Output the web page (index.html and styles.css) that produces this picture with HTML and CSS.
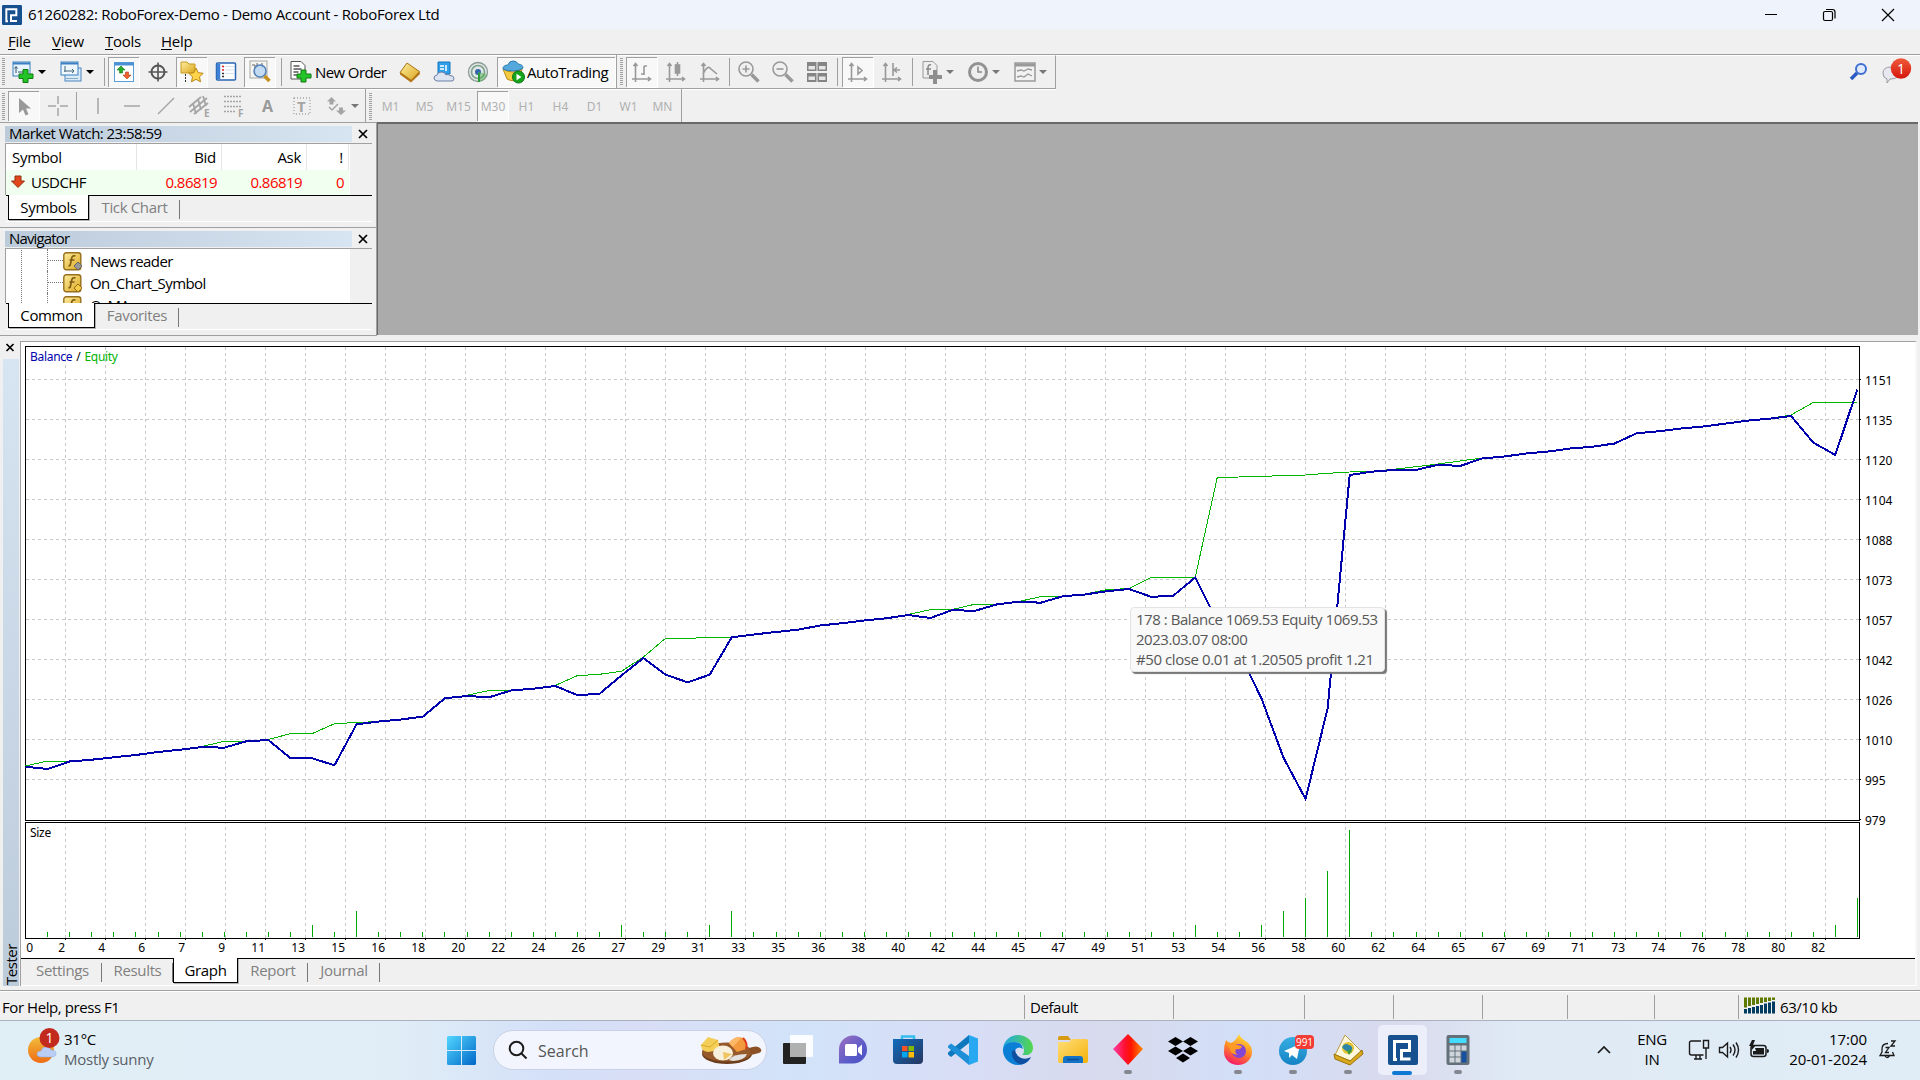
FILE: index.html
```html
<!DOCTYPE html>
<html lang="en">
<head>
<meta charset="utf-8">
<title>61260282: RoboForex-Demo - Demo Account - RoboForex Ltd</title>
<link rel="stylesheet" href="styles.css">
</head>
<body>
<svg class="defs" width="0" height="0">
  <defs>
    <linearGradient id="gold" x1="0" y1="0" x2="1" y2="1"><stop offset="0" stop-color="#fdeea0"/><stop offset="1" stop-color="#dba51c"/></linearGradient>
    <linearGradient id="win" x1="0" y1="0" x2="1" y2="1"><stop offset="0" stop-color="#52d7ff"/><stop offset="1" stop-color="#0067c8"/></linearGradient>
    <linearGradient id="sun" x1="0" y1="0" x2="0" y2="1"><stop offset="0" stop-color="#f0bc3a"/><stop offset="1" stop-color="#ef6c14"/></linearGradient>
    <linearGradient id="purple" x1="0" y1="0" x2="1" y2="1"><stop offset="0" stop-color="#a070c0"/><stop offset=".6" stop-color="#5b5cc8"/><stop offset="1" stop-color="#4a4fc4"/></linearGradient>
    <linearGradient id="store" x1="0" y1="0" x2="1" y2="1"><stop offset="0" stop-color="#0f6cbd"/><stop offset="1" stop-color="#26365e"/></linearGradient>
    <linearGradient id="edge" x1="0" y1="0" x2="1" y2="0"><stop offset="0" stop-color="#1fa4e8"/><stop offset="1" stop-color="#55d84b"/></linearGradient>
    <linearGradient id="folder" x1="0" y1="0" x2="1" y2="1"><stop offset="0" stop-color="#ffdf7a"/><stop offset="1" stop-color="#f5b10a"/></linearGradient>
    <linearGradient id="diamond" x1="0" y1="0" x2="1" y2="0"><stop offset="0" stop-color="#ff3ca8"/><stop offset=".4" stop-color="#ff1030"/><stop offset=".6" stop-color="#ff1400"/><stop offset="1" stop-color="#ff8a00"/></linearGradient>
    <linearGradient id="fox" x1=".7" y1="0" x2=".3" y2="1"><stop offset="0" stop-color="#ffe33a"/><stop offset=".5" stop-color="#ff8a22"/><stop offset="1" stop-color="#f5156c"/></linearGradient>
    <linearGradient id="tele" x1="0" y1="0" x2="0" y2="1"><stop offset="0" stop-color="#37aee2"/><stop offset="1" stop-color="#1583c4"/></linearGradient>
    <linearGradient id="badge" x1="0" y1="0" x2="0" y2="1"><stop offset="0" stop-color="#ef5a3a"/><stop offset="1" stop-color="#d5170d"/></linearGradient>
    <symbol id="fn" viewBox="0 0 20 20">
      <rect x=".8" y=".8" width="17" height="17" rx="2.5" fill="url(#gold)" stroke="#96701c" stroke-width="1.4"/>
      <path d="M12.500 4c-3-1-3.600 1-4 3l-1 5c-.3 1.500-1 2-2 1.500M6.500 8h5" fill="none" stroke="#7d5a10" stroke-width="1.600"/>
    </symbol>
    <symbol id="robo" viewBox="0 0 30 30">
      <rect width="30" height="30" rx="2" fill="#17508f"/>
      <path d="M6.500 25.500V6.500H21.500V15.500H13.500V24H22.500M5 24.500H9" fill="none" stroke="#fff" stroke-width="3"/>
    </symbol>
  </defs>
</svg>

<header class="titlebar">
  <svg class="app-icon" width="20" height="20"><use href="#robo" width="20" height="20"/></svg>
  <span class="title-text">61260282: RoboForex-Demo - Demo Account - RoboForex Ltd</span>
  <div class="win-controls">
    <svg width="60" height="28"><path d="M25 13.500h12" stroke="#000"/></svg>
    <svg width="58" height="28" fill="none" stroke="#000" stroke-width="1.200"><rect x="23.500" y="10.500" width="9" height="9" rx="1.500"/><path d="M26 8.500h6.500q2.500 0 2.500 2.500v6.500"/></svg>
    <svg width="60" height="28"><path d="M24 8l12 12M36 8L24 20" stroke="#000" stroke-width="1.200"/></svg>
  </div>
</header>

<nav class="menubar">
  <span class="m-file"><u>F</u>ile</span><span class="m-view"><u>V</u>iew</span><span class="m-tools"><u>T</u>ools</span><span class="m-help"><u>H</u>elp</span>
</nav>

<div class="toolrow row-one">
  <div class="toolbar">
    <i class="grip"></i>
    <span class="btn tight"><svg width="22" height="22"><rect x="1" y="1" width="17" height="14" fill="#e8f4fd" stroke="#3a7fc0"/><path d="M1 2.500h17" stroke="#3a7fc0" stroke-width="2"/><path d="M4 6v6M2.500 7.500L4 5.500l1.500 2M6 11h6" stroke="#356" fill="none"/><path d="M11 8.500h5v4.500h5v4.500h-5v4h-5v-4H7V13h4z" fill="#22c427" stroke="#107a12"/></svg></span><i class="arr"></i>
    <span class="btn tight ml9"><svg width="22" height="22"><rect x="5" y="7" width="16" height="13" fill="#d9ebf8" stroke="#4a86c0"/><rect x="1" y="1" width="17" height="13" fill="#edf6fd" stroke="#3a7fc0"/><path d="M1 2.500h17" stroke="#3a7fc0" stroke-width="2"/><path d="M4 10h10M5 5v6M12 8l2 2-2 2" stroke="#467" fill="none"/><path d="M6 17.500h12" stroke="#8ab"/></svg></span><i class="arr"></i>
    <i class="sep ml9"></i>
    <span class="btn on ml3"><svg width="22" height="22"><rect x="1.500" y="1.500" width="19" height="19" fill="#fff" stroke="#5a9fd8"/><path d="M1 3h20" stroke="#4a90d4" stroke-width="3"/><path d="M8 5l4 4H9.500v3h-3V9H4z" fill="#22ac26" stroke="#14781a" stroke-width=".6"/><path d="M14 18l4-4h-2.500v-3h-3v3H10z" fill="#f0622c" stroke="#b03a14" stroke-width=".6"/></svg></span>
    <span class="btn"><svg width="22" height="22" fill="none" stroke="#555" stroke-width="2"><circle cx="11" cy="11" r="6.500"/><path d="M11 1.500v19M1.500 11h19" stroke-width="1.600"/></svg></span>
    <span class="btn on"><svg width="24" height="24"><path d="M1 5V2h6l2 2h6v9H1z" fill="url(#gold)" stroke="#c79a1e"/><path d="M5.500 14v8" stroke="#333" stroke-dasharray="2 1"/><path d="M16 8l2.200 4.700 5 .6-3.700 3.500 1 5L16 19.300l-4.500 2.500 1-5-3.700-3.500 5-.6z" fill="#fbd44a" stroke="#b98613"/></svg></span>
    <span class="btn"><svg width="22" height="22"><rect x="1.500" y="2" width="19" height="17" rx="1" fill="#fdfeff" stroke="#2a66b4" stroke-width="1.500"/><path d="M3.500 3v15" stroke="#3d82d4" stroke-width="3.500"/><path d="M7 5.500h2M7 9h2" stroke="#d22" stroke-width="1.500"/><path d="M7 12.500h2M7 15.500h2" stroke="#333" stroke-width="1.500"/><path d="M10 5.500h9M10 9h9M10 12.500h9" stroke="#d6e2ee"/></svg></span>
    <span class="btn on"><svg width="24" height="24"><rect x="2" y="1" width="17" height="17" fill="#f5f5f2" stroke="#a5a5a0"/><path d="M4 5h3v8M9 3v5M14 3v5" stroke="#666" fill="none"/><circle cx="12" cy="11" r="6" fill="#b9d6f3" fill-opacity=".85" stroke="#4f7fb5" stroke-width="1.500"/><path d="M16.500 16l5 5" stroke="#c8901c" stroke-width="3.500"/></svg></span>
    <i class="sep ml3"></i>
    <span class="btn ml3"><svg width="24" height="24"><path d="M2 1.500h10l4 4V19H2z" fill="#fff" stroke="#555"/><path d="M4.500 6h6M4.500 9h8M4.500 12h5M4.500 15h4" stroke="#555" stroke-width="1.500"/><path d="M12 10h5v4h5v4h-5v4h-5v-4H8v-4h4z" fill="#22c427" stroke="#107a12"/></svg></span>
    <span class="btn-label">New Order</span>
    <span class="btn"><svg width="22" height="22"><path d="M1 11.500L8 2l12.500 8.500-8 9z" fill="url(#gold)" stroke="#a8741a"/><path d="M1 11v2.500l11 8V19zM12 19v2.500l9-8.500-.5-2.500z" fill="#b37516"/></svg></span>
    <span class="btn"><svg width="22" height="22"><path d="M5 1h12v12H5z" fill="#2f9fe8" stroke="#1b74bd"/><path d="M7 5h4M13 4v6M7 8h4" stroke="#fff" stroke-width="1.500"/><path d="M4 20q-3-.5-3-3t3-3q1-3 4.500-3t4.500 3q2-1.500 4 .5 4 0 4 3t-3 2.500z" fill="#dce4f2" stroke="#6c7fa5"/></svg></span>
    <span class="btn"><svg width="22" height="22" fill="none"><circle cx="11" cy="11" r="9.500" fill="#e2e8e5" stroke="#8a9a94" stroke-width="1.300"/><circle cx="11" cy="11" r="6.500" stroke="#7fa08e" stroke-width="1.600"/><circle cx="11" cy="11" r="3" fill="#3366aa"/><path d="M11 11v10q7-1 9-8" fill="#59b45a" fill-opacity=".55"/><path d="M12 12v9" stroke="#2a9a3a" stroke-width="2"/></svg></span>
    <span class="btn on wide ml1"><svg width="24" height="24"><path d="M1 9q10 6 19 0l-2 9q-6 5-13 1z" fill="#f2cb3e" stroke="#b98a1a"/><path d="M1 9Q1 5 6 5q1-4 5-4t5 3q5 .5 5 4-3 3-10 3T1 9z" fill="#54a8dc" stroke="#2d7cb0"/><circle cx="16.500" cy="17" r="6" fill="#15a51c" stroke="#0b7511"/><path d="M14.500 13.800l5 3.200-5 3.200z" fill="#fff"/></svg><span class="auto">AutoTrading</span></span>
    <i class="sep edge"></i>
    <i class="grip short"></i>
    <span class="btn on"><svg width="22" height="22" class="gi"><path d="M4.500 2v19M1 18h19M2.500 5l2-2.500 2 2.500M17 16l2.500 2-2.500 2M13 5v9M13 5h3M10 13h3"/></svg></span>
    <span class="btn"><svg width="22" height="22" class="gi"><path d="M4.500 2v19M1 18h19M2.500 5l2-2.500 2 2.500M17 16l2.500 2-2.500 2M12.500 1v14"/><rect x="10.500" y="4" width="4" height="8" fill="#999"/></svg></span>
    <span class="btn"><svg width="22" height="22" class="gi"><path d="M4.500 2v19M1 18h19M2.500 5l2-2.500 2 2.500M17 16l2.500 2-2.500 2M4 13q5-10 8-5l6 5"/></svg></span>
    <i class="sep ml1"></i>
    <span class="btn ml3"><svg width="24" height="24" class="gi"><circle cx="9" cy="9" r="7"/><path d="M5.500 9h7M9 5.500v7"/><path d="M14.500 14.500l7 7" stroke-width="3.500"/></svg></span>
    <span class="btn"><svg width="24" height="24" class="gi"><circle cx="9" cy="9" r="7"/><path d="M5.500 9h7"/><path d="M14.500 14.500l7 7" stroke-width="3.500"/></svg></span>
    <span class="btn"><svg width="22" height="22"><path d="M1 1h9.500v9H1zM11.500 1H21v9h-9.500zM1 12h9.500v9H1zM11.500 12H21v9h-9.500z" fill="#858585"/><path d="M2.500 5h6.500v3.500H2.500zM13 5h6.500v3.500H13zM2.500 15.500h6.500V19H2.500zM13 15.500h6.500V19H13z" fill="#e6e6e6"/></svg></span>
    <i class="sep ml2"></i>
    <span class="btn on ml4"><svg width="22" height="22" class="gi"><path d="M4.500 2v19M1 18h19M2.500 5l2-2.500 2 2.500M17 16l2.500 2-2.500 2M11 6v7l4-3.500z"/></svg></span>
    <span class="btn"><svg width="22" height="22" class="gi"><path d="M4.500 2v19M1 18h19M2.500 5l2-2.500 2 2.500M17 16l2.500 2-2.500 2M12 2v13M13 9h6M16 6.500L13 9l3 2.500"/></svg></span>
    <i class="sep ml2"></i>
    <span class="btn ml4"><svg width="24" height="24"><path d="M2 1.500h10l4 4V18H2z" fill="#eee" stroke="#999"/><path d="M10 5q-3-1-3 3v7M5 9h5" stroke="#888" stroke-width="1.500" fill="none"/><path d="M12 10h4v5h5v4h-5v5h-4v-5H8v-4h4z" fill="#8e8e8e"/></svg></span><i class="arr dim near"></i>
    <span class="btn nud"><svg width="22" height="22"><circle cx="11" cy="11" r="8.500" fill="#eee" stroke="#929292" stroke-width="3"/><path d="M11 5.500V11h4" stroke="#888" fill="none" stroke-width="1.500"/></svg></span><i class="arr dim"></i>
    <span class="btn nud more"><svg width="22" height="22"><rect x="1" y="2" width="20" height="18" fill="#f2f2f2" stroke="#999" stroke-width="1.500"/><path d="M1 4h20" stroke="#999" stroke-width="3"/><path d="M3 10l4-1 3 1 4-2 4 1M3 16l4-1 3 1 4-3 4 2" fill="none" stroke="#999" stroke-width="1.300"/></svg></span><i class="arr dim"></i>
  </div>
  <div class="right-tools">
    <svg width="20" height="20" fill="none"><circle cx="12" cy="7" r="5" fill="#dfeaff" stroke="#3c6fd0" stroke-width="2"/><path d="M8 11l-6 6" stroke="#2b5cc4" stroke-width="3.500"/></svg>
    <svg width="34" height="28"><path d="M2 16q0-6 8-6t8 6-9 6l-3 4v-4q-4-1-4-6z" fill="#e8e8f0" stroke="#9a9aa4"/><circle cx="20" cy="11.500" r="10.200" fill="url(#badge)"/><text x="20" y="16.500" text-anchor="middle" class="badge-num">1</text></svg>
  </div>
</div>

<div class="toolrow row-two">
  <div class="toolbar">
    <i class="grip"></i>
    <span class="btn on"><svg width="22" height="22"><path d="M6 2v15l4-3.500 2.500 6 3-1.300L13 12.500h5z" fill="#999"/></svg></span>
    <span class="btn"><svg width="22" height="22" class="gl"><path d="M11 1v8M11 13v8M1 11h8M13 11h8"/></svg></span>
    <i class="sep"></i>
    <span class="btn ml5"><svg width="22" height="22" class="gl"><path d="M11 3v16"/></svg></span>
    <span class="btn"><svg width="22" height="22" class="gl"><path d="M3 11h16"/></svg></span>
    <span class="btn"><svg width="22" height="22" class="gl"><path d="M3 19L19 3"/></svg></span>
    <span class="btn"><svg width="24" height="24" class="gl"><path d="M1 13L13 3M2 18L19 4M6 20L20 9M5 9l3 11M10 5l3 11M15 2l3 10" stroke-width="1.800"/><text x="16" y="23" class="gt">E</text></svg></span>
    <span class="btn"><svg width="24" height="24" class="gl"><path d="M2 2.500h18M2 7.500h18M2 12.500h18M2 17.500h12" stroke-dasharray="2 1" stroke-width="1.500"/><text x="16" y="23" class="gt">F</text></svg></span>
    <span class="btn"><b class="letter">A</b></span>
    <span class="btn"><svg width="22" height="22" class="gl"><rect x="3" y="3" width="16" height="16" stroke-dasharray="1 2" stroke-width="1.300"/><text x="6" y="17" class="gt big">T</text></svg></span>
    <span class="btn"><svg width="22" height="22" fill="#a5a5a5"><path d="M6.500 2l4.500 4.500-2.500 0v3H4.500v-3H2zM16 20l-5-4.500h3v-3h4v3h3z"/><path d="M4 12l3 3 6-6" fill="none" stroke="#a5a5a5" stroke-width="1.500"/></svg></span><i class="arr dim"></i>
    <i class="sep edge ml5"></i>
    <i class="grip short"></i>
    <span class="btn tf">M1</span><span class="btn tf">M5</span><span class="btn tf">M15</span><span class="btn on tf">M30</span><span class="btn tf">H1</span><span class="btn tf">H4</span><span class="btn tf">D1</span><span class="btn tf">W1</span><span class="btn tf mn">MN</span>
  </div>
</div>

<main class="dock">
  <aside class="side">
    <section class="panel watch">
      <div class="cap"><span class="cap-t">Market Watch: 23:58:59</span><svg width="10" height="10"><path d="M1 1l8 8M9 1L1 9" stroke="#000" stroke-width="1.700"/></svg></div>
      <div class="box">
        <div class="grid head"><span>Symbol</span><span>Bid</span><span>Ask</span><span>!</span></div>
        <div class="grid quote"><span><svg width="14" height="13"><path d="M4 1h6v5h3.500L7 12.500.5 6H4z" fill="#e2471c" stroke="#93300f"/></svg>USDCHF</span><span>0.86819</span><span>0.86819</span><span>0</span></div>
      </div>
      <div class="tabs"><span class="tab active t-sym">Symbols</span><span class="tab t-tick">Tick Chart</span></div>
    </section>
    <section class="panel navi">
      <div class="cap"><span class="cap-n">Navigator</span><svg width="10" height="10"><path d="M1 1l8 8M9 1L1 9" stroke="#000" stroke-width="1.700"/></svg></div>
      <div class="box tree">
        <div class="node"><svg width="20" height="20"><use href="#fn" width="20" height="20"/><path d="M15 10l4 4-4 4-4-4z" fill="#999" stroke="#666"/></svg><span class="n1">News reader</span></div>
        <div class="node"><svg width="20" height="20"><use href="#fn" width="20" height="20"/><path d="M15 10l4 4-4 4-4-4z" fill="#f3cb45" stroke="#96701c"/></svg><span class="n2">On_Chart_Symbol</span></div>
        <div class="node"><svg width="20" height="20"><use href="#fn" width="20" height="20"/></svg><span>OzMA</span></div>
      </div>
      <div class="tabs"><span class="tab active t-com">Common</span><span class="tab t-fav">Favorites</span></div>
    </section>
  </aside>
  <div class="workspace"></div>
</main>

<section class="tester">
  <div class="rail">
    <svg width="20" height="17"><path d="M6.500 4l7 7M13.500 4l-7 7" stroke="#000" stroke-width="1.700"/></svg>
    <div class="rail-bar"><span>Tester</span></div>
  </div>
  <div class="tester-main">
    <div class="graph">
      <div class="plot-col">
        <div class="plot">
          <svg class="chart" width="1840" height="598" viewBox="25 346 1840 598">
            <g stroke="#c8c8c8" stroke-dasharray="3 3" shape-rendering="crispEdges">
              <path d="M26 379.500H1859M26 419.500H1859M26 459.500H1859M26 499.500H1859M26 539.500H1859M26 579.500H1859M26 619.500H1859M26 659.500H1859M26 699.500H1859M26 739.500H1859M26 779.500H1859"/>
              <path d="M65.500 347V938M105.500 347V938M145.500 347V938M185.500 347V938M225.500 347V938M265.500 347V938M305.500 347V938M345.500 347V938M385.500 347V938M425.500 347V938M465.500 347V938M505.500 347V938M545.500 347V938M585.500 347V938M625.500 347V938M665.500 347V938M705.500 347V938M745.500 347V938M785.500 347V938M825.500 347V938M865.500 347V938M905.500 347V938M945.500 347V938M985.500 347V938M1025.500 347V938M1065.500 347V938M1105.500 347V938M1145.500 347V938M1185.500 347V938M1225.500 347V938M1265.500 347V938M1305.500 347V938M1345.500 347V938M1385.500 347V938M1425.500 347V938M1465.500 347V938M1505.500 347V938M1545.500 347V938M1585.500 347V938M1625.500 347V938M1665.500 347V938M1705.500 347V938M1745.500 347V938M1785.500 347V938M1825.500 347V938"/>
            </g>
            <g fill="none" stroke="#000" shape-rendering="crispEdges">
              <path d="M25.500 346.500H1859.500V820.500H25.500zM25.500 822.500H1859.500V938.500H25.500z"/>
              <path d="M26 821.500H1859" stroke="#fff"/>
              <path d="M65 939.500H1860" stroke-dasharray="1 39"/>
              <path d="M1860.500 379V821" stroke-dasharray="1 39"/>
            </g>
            <g fill="none" shape-rendering="crispEdges">
              <polyline stroke="#00b400" vector-effect="non-scaling-stroke" transform="translate(25.500 0) scale(22.07 1)" points="0,766 1,761 2,761 3,759.700 7,749.700 8,746.500 9,741.300 10,741 11,739.500 12,733.700 13,733.500 14,723.700 15,722.500 16,721.500 17,719.300 18,716.700 19,698.300 20,695.300 21,690.500 22,690 23,688.700 24,685.500 25,675.700 26,674.300 27,671.300 28,657 29,638.300 30,638.300 31,637.500 32,637 33,634.300 34,631.700 35,629.700 36,625 37,622.700 38,620.300 39,618.300 40,614.500 41,609.700 42,609.500 43,604.300 44,604 45,601.500 46,596.700 47,596 48,594 49,589.700 50,588.500 51,577.300 53,577.300 54,477.300 55,477 56,476.300 57,475.700 58,475 59,473.300 60,472 61,471.300 62,469.300 63,466.700 64,464 65,461 66,458 67,456.300 71,446.500 72,443 73,433 74,431 75,428 76,426 77,423.700 78,420.300 79,418.500 80,415 81,402.500 83,402.500"/>
              <polyline stroke="#0000ac" stroke-width="2" vector-effect="non-scaling-stroke" transform="translate(25.500 0) scale(22.07 1)" points="0,766.700 1,769 2,761.500 3,759.700 4,757.300 5,755 6,752 7,749.700 8,747 9,747.700 10,741.300 11,740 12,758 13,758.300 14,765.300 15,724.300 16,721.500 17,719.500 18,716.700 19,698.300 20,696 21,697.300 22,690.500 23,688.700 24,686 25,695 26,694 27,675.500 28,658 29,674.700 30,682.300 31,674.700 32,637.300 33,634.500 34,632 35,629.700 36,625.500 37,623.200 38,620.500 39,618.300 40,615 41,618 42,610 43,611 44,604.500 45,601.700 46,602.700 47,596.300 48,594.500 49,591.200 50,589 51,596.800 52,595.800 53,577.500 54,621.700 55,653 56,698.300 57,757.700 58,799 59,708.300 60,475 61,471.700 62,470 63,470 64,464.700 65,466 66,458.500 67,456.500 68,453.500 69,451.500 70,448.500 71,446.700 72,443.500 73,433.300 74,431.300 75,428.500 76,426.500 77,423.700 78,420.700 79,418.700 80,416 81,442.500 82,455 83,389.500"/>
              <path stroke="#00a800" stroke-width="5" stroke-dasharray="1 21.070" d="M47.200 934.500H1858"/>
              <path stroke="#00a800" vector-effect="non-scaling-stroke" transform="translate(25.500 0) scale(22.07 1)" d="M13 925V937M15 911V937M27 925V937M31 925V937M32 911V937M53 925V937M56 925V937M57 911V937M58 898V937M59 871V937M60 830V937M82 925V937M83 898V937"/>
            </g>
          </svg>
          <div class="legend"><span class="lb">Balance</span> / <span class="lg">Equity</span></div>
          <div class="size-label">Size</div>
        </div>
        <div class="xaxis"><span>0</span><span>2</span><span>4</span><span>6</span><span>7</span><span>9</span><span>11</span><span>13</span><span>15</span><span>16</span><span>18</span><span>20</span><span>22</span><span>24</span><span>26</span><span>27</span><span>29</span><span>31</span><span>33</span><span>35</span><span>36</span><span>38</span><span>40</span><span>42</span><span>44</span><span>45</span><span>47</span><span>49</span><span>51</span><span>53</span><span>54</span><span>56</span><span>58</span><span>60</span><span>62</span><span>64</span><span>65</span><span>67</span><span>69</span><span>71</span><span>73</span><span>74</span><span>76</span><span>78</span><span>80</span><span>82</span></div>
      </div>
      <div class="yaxis"><span>1151</span><span>1135</span><span>1120</span><span>1104</span><span>1088</span><span>1073</span><span>1057</span><span>1042</span><span>1026</span><span>1010</span><span>995</span><span>979</span></div>
      <div class="tooltip"><span>178 : Balance 1069.53 Equity 1069.53</span><br><span>2023.03.07 08:00</span><br><span class="deal">#50 close 0.01 at 1.20505 profit 1.21</span></div>
    </div>
    <div class="tabs tester-tabs"><span class="tab t-set">Settings</span><span class="tab t-res">Results</span><span class="tab active t-gra">Graph</span><span class="tab t-rep">Report</span><span class="tab t-jou">Journal</span></div>
  </div>
</section>

<footer class="status">
  <span class="s-help">For Help, press F1</span><span class="c1">Default</span><span class="c2"></span><span class="c3"></span><span class="c4"></span><span class="c5"></span><span class="c6"></span><span class="c7"></span>
  <span class="traffic"><svg width="32" height="17"><path d="M0 .5h3v10H0zM4 .5h3V9H4zM8 .5h3V8H8zM12 .5h3V7h-3zM16 .5h3V6h-3zM20 .5h3V5h-3zM24 .5h3V4h-3zM28 .5h3V3h-3z" fill="#5f7a00"/><path d="M0 12h3v4.500H0zM4 11h3v5.500H4zM8 10h3v6.500H8zM12 9h3v7.500h-3zM16 8h3v8.500h-3zM20 6.500h3v10h-3zM24 5.500h3v11h-3zM28 4.500h3v12h-3z" fill="#003c5f"/></svg>63/10 kb</span>
</footer>

<footer class="taskbar">
  <div class="weather">
    <svg width="38" height="40"><circle cx="14" cy="23" r="13" fill="url(#sun)"/><path d="M14 30q-4 0-4-3t4-3q1-4 5-4t5 3q5 0 5 3.500T24 30z" fill="#b9cdf5" stroke="#8aa8e0" stroke-width=".5"/><circle cx="22.500" cy="11" r="10" fill="#c32a1e"/><text x="22.500" y="16" text-anchor="middle" class="badge-num">1</text></svg>
    <div class="wt"><span>31°C</span><span class="w2">Mostly sunny</span></div>
  </div>
  <div class="apps">
    <svg class="start" width="30" height="30"><path d="M0 1.500Q0 0 1.500 0H14v14H0zM15 0h12.500Q29 0 29 1.500V14H15zM0 15h14v14H1.500Q0 29 0 27.500zM15 15h14v12.500q0 1.500-1.500 1.500H15z" fill="url(#win)"/></svg>
    <div class="search">
      <svg width="20" height="20" fill="none" stroke="#1c1c1c" stroke-width="2"><circle cx="8.500" cy="8.500" r="6.800"/><path d="M13.500 13.500l5 5"/></svg>
      <span>Search</span>
      <svg class="food" width="62" height="32"><ellipse cx="27" cy="19" rx="25" ry="10" fill="#6d3d1c"/><ellipse cx="27" cy="17" rx="25" ry="9.500" fill="#96592b"/><path d="M49 13q8-3 11 0t-1 5l-8 2z" fill="#8b5026"/><path d="M1 10L8 2l10 3 2 10-12 2q-7-1-7-7z" fill="#f3cf58"/><path d="M1 10l9 2 8-7" stroke="#d9a92a" fill="none"/><path d="M29 8q6-8 14-5 4 4 3 11l-9 3z" fill="#f49a3e"/><path d="M29 8q6-8 12-5L33 12z" fill="#ffb868"/><path d="M43 3q5 5 3 11" stroke="#dc3c1c" stroke-width="2" fill="none"/><ellipse cx="23" cy="18" rx="10" ry="7.500" fill="#f7f0dc"/><path d="M23 17l9 2-8 6z" fill="#eec560"/><path d="M29 25q3-6 18-6-2 6-14 7z" fill="#e4e2e0"/></svg>
    </div>
    <span class="app"><svg width="32" height="32"><rect x="1" y="9" width="23" height="21" rx="1" fill="#222"/><rect x="8" y="1" width="23" height="22" rx="1" fill="#fff" fill-opacity=".88"/><rect x="8" y="9" width="16" height="14" fill="#b0b0b0"/></svg></span>
    <span class="app"><svg width="32" height="32"><path d="M2 30V15a14 14 0 1 1 14 14.500H2z" fill="url(#purple)"/><rect x="8" y="10" width="12" height="12" rx="1.500" fill="#fff"/><path d="M21 14l4-3.500v11L21 18z" fill="#fff"/></svg></span>
    <span class="app"><svg width="32" height="32"><path d="M10 6V2.500h12V6" stroke="#35bdf0" stroke-width="2.500" fill="none"/><path d="M1 5h30v21q0 4-4 4H5q-4 0-4-4z" fill="url(#store)"/><path d="M10 12h5.500v5H10z" fill="#f35325"/><path d="M16.500 12H22v5h-5.500z" fill="#81bc06"/><path d="M10 18h5.500v5.500H10z" fill="#05a6f0"/><path d="M16.500 18H22v5.500h-5.500z" fill="#ffba08"/></svg></span>
    <span class="app"><svg width="32" height="32"><path d="M22 1v8L4 23l-3-2.500v-2z" fill="#0f77bd"/><path d="M1 12l3-2.500L22 22v9L1 13.500z" fill="#1d8fd8"/><path d="M22 1l9 3.500v23L22 31z" fill="#29a8f2"/></svg></span>
    <span class="app"><svg width="32" height="32"><path d="M16 1a15 15 0 0 0-15 14Q5 8 13 8q8 0 9 8 0 4-2 5h6q5-2 5-7A15 13 0 0 0 16 1z" fill="url(#edge)"/><path d="M1 15Q3 8 12 8q8 0 9 7-4-3-7 0-3 4 0 9 4 6 12 3-4 4-10 4A15 15 0 0 1 1 15z" fill="#0b7fd6"/><path d="M10 17q-1 6 4 11 4 3 7 2 6-2 8-7-5 3-10 1-5-2-6-8z" fill="#0f4f9f"/></svg></span>
    <span class="app"><svg width="32" height="32"><path d="M1 4q0-2 2-2h8l3 4H1z" fill="#d99a13"/><path d="M1 8h11l3-3h14q2 0 2 2v20q0 2-2 2H3q-2 0-2-2z" fill="url(#folder)"/><path d="M6 29v-4q0-3 3-3h14q3 0 3 3v4z" fill="#1473c4"/><path d="M10 25.500h12" stroke="#0b4f93" stroke-width="1.500"/></svg></span>
    <span class="app run"><svg width="32" height="32"><path d="M16 0l15 15-15 16L1 15z" fill="url(#diamond)"/></svg></span>
    <span class="app"><svg width="32" height="32"><path d="M8.500 3L16 7.500 8.500 12 1 7.500zM23.500 3L31 7.500 23.500 12 16 7.500zM8.500 12.500L16 17l-7.500 4.500L1 17zM23.500 12.500L31 17l-7.500 4.500L16 17zM16 19.500l7 4.500-7 4.500L9 24z" fill="#000"/></svg></span>
    <span class="app run"><svg width="32" height="32"><path d="M4 6q2 3 5 3 5-2 8-9 1 4 8 8 5 4 5 10a14 13 0 0 1-28 0Q2 11 4 6z" fill="url(#fox)"/><circle cx="17" cy="17" r="7" fill="#8346d4"/><path d="M5 10q6-2 10 1l5 1q-1 4-6 3-2 4 2 6-8-1-8-6z" fill="#ff9b25"/></svg></span>
    <span class="app run"><svg width="44" height="34"><circle cx="22" cy="17" r="14" fill="url(#tele)"/><path d="M13 17l16-7-3 15-5-4-3 3v-5z" fill="#fff"/><rect x="24" y="1" width="19" height="14" rx="4" fill="#f23c34"/><text x="33.500" y="12" text-anchor="middle" class="mini">991</text></svg></span>
    <span class="app run"><svg width="32" height="32"><path d="M3 21L13 1l17 17-11 9z" fill="#fff8dc" stroke="#b89a4a"/><path d="M2 20l1 5 15 6 13-11-1-4-12 11z" fill="#d9a81c" stroke="#9a7410"/><circle cx="16" cy="14" r="6" fill="#e3c22e"/><path d="M10 13q3-5 7-2 4 1 3 5-5 4-10-3z" fill="#2d86a8"/><path d="M15 17q3-3 5 0l-3 4z" fill="#3c9a3a"/></svg></span>
    <span class="app sel run"><svg width="30" height="30"><use href="#robo" width="30" height="30"/></svg></span>
    <span class="app run"><svg width="32" height="32"><rect x="4.500" y="1" width="23" height="30" rx="2" fill="#63707a"/><rect x="7.500" y="4" width="17" height="5" fill="#43dcff"/><path d="M7.500 11.500h5v5h-5zM13.500 11.500h5v5h-5zM19.500 11.500h5v5h-5zM7.500 17.500h5v5h-5zM13.500 17.500h5v5h-5zM7.500 23.500h5v5h-5zM13.500 23.500h5v5h-5z" fill="#cfd5da"/><path d="M19.500 17.500h5v11h-5z" fill="#17509e"/></svg></span>
  </div>
  <div class="tray">
    <svg width="16" height="12" fill="none" stroke="#1a1a1a" stroke-width="1.700"><path d="M2 9l6-6 6 6"/></svg>
    <div class="lang"><span>ENG</span><span>IN</span></div>
    <svg width="22" height="22" fill="none" stroke="#1a1a1a" stroke-width="1.400"><path d="M13 2H3.500Q1.500 2 1.500 4v10q0 2 2 2h12M6 20h8M8 16v4M12 16v4"/><path d="M15.500 1.500h5V9h-5zM18 9v11"/></svg>
    <svg class="spk" width="22" height="20" fill="none" stroke="#1a1a1a" stroke-width="1.400"><path d="M1.500 7.500h3l5-4.500v14l-5-4.500h-3zM12 7q2 3 0 6M15 4.500q4 5.500 0 11M18 2.500q5 7.500 0 15"/></svg>
    <svg class="bat" width="22" height="20"><rect x="3" y="5.500" width="15" height="11" rx="2.500" fill="none" stroke="#1a1a1a" stroke-width="1.500"/><path d="M19 9q2 0 2 2t-2 2z" fill="#1a1a1a"/><path d="M7 8h9v6.500H5V11h3z" fill="#1a1a1a"/><path d="M4 0L1 6h3l-1 5 5-6H5l2-5z" fill="#1a1a1a"/></svg>
    <div class="clock"><span>17:00</span><span>20-01-2024</span></div>
    <svg class="bell" width="20" height="22" fill="none" stroke="#1a1a1a" stroke-width="1.300"><path d="M10 4.500Q4 4.500 4 10v3l-2 3.500h14L14.500 13M7 17q2 3 4.500 0M13 2h4l-4 5h4M7.500 8.500h3.500l-3.500 5h3.500"/></svg>
  </div>
</footer>
</body>
</html>
```
FILE: styles.css
```css
* { box-sizing: border-box; }
html, body { margin: 0; height: 100%; overflow: hidden; }
body {
  display: flex; flex-direction: column; width: 1920px; height: 1080px;
  background: #f0f0f0; color: #000;
  font: 15px/20px "Open Sans", "Noto Sans", sans-serif;
}
svg { display: block; flex: none; }
.defs { position: absolute; }
span { white-space: nowrap; }

.titlebar { display: flex; align-items: center; height: 29px; flex: none; padding-left: 2px; background: #eff3fb; }
.title-text { margin-left: 6px; padding-bottom: 2px; letter-spacing: -.32px; }
.win-controls { display: flex; margin-left: auto; margin-right: 2px; }

.menubar { display: flex; height: 25px; flex: none; padding-left: 8px; line-height: 24px; letter-spacing: -.25px; }
.menubar u { text-underline-offset: 2px; }
.m-file { width: 44px; } .m-view { width: 53px; } .m-tools { width: 56px; }

.toolrow { display: flex; height: 34px; flex: none; justify-content: space-between; }
.toolbar { display: flex; align-items: center; height: 34px; }
.row-one { border-top: 1px solid #a0a0a0; box-shadow: inset 0 1px #fff; }
.row-one .toolbar { width: 1056px; padding-bottom: 2px; border-top: 1px solid #fff; border-right: 1px solid #a0a0a0; }
.row-two { background: linear-gradient(#a0a0a0 50%, #fff 50%) 0 0 / 1056px 2px no-repeat; }
.row-two .toolbar { width: 682px; padding-top: 2px; border-right: 1px solid #a0a0a0; }
.grip { width: 3px; height: 27px; margin: 0 3px 0 2px; flex: none; background: repeating-linear-gradient(#a0a0a0 0 1px, transparent 1px 2px); }
.grip.short { margin-left: 3px; }
.btn { display: flex; align-items: center; justify-content: center; width: 31px; height: 30px; margin-right: 3px; flex: none; }
.btn.tight { width: 30px; margin-right: 0; }
.btn.nud { margin-right: 2px; margin-left: 8px; width: 30px; }
.btn.more { margin-left: 9px; }
.btn.on { border: solid #a0a0a0; border-width: 1px 0 0 1px; box-shadow: 1px 1px #fff; background: #f8f8f8; }
.btn.wide { width: 118px; justify-content: flex-start; padding-left: 4px; margin-right: 0; }
.auto { margin-left: 1px; letter-spacing: -.45px; }
.btn-label { width: 77px; margin-left: -4px; margin-right: 2px; letter-spacing: -.6px; }
.arr { width: 0; height: 0; margin-right: 1px; flex: none; border: 4px solid transparent; border-top-color: #000; border-bottom: 0; }
.arr.dim { margin-left: -3px; border-top-color: #777; }
.arr.dim.near { margin-left: -5px; }
.sep { width: 1px; height: 28px; flex: none; background: #a0a0a0; }
.sep.edge { height: 34px; margin-left: 1px; }
.sep.edge.ml5 { margin-left: 5px; }
.ml1 { margin-left: 1px; } .ml2 { margin-left: 2px; } .ml3 { margin-left: 3px; } .ml4 { margin-left: 4px; } .ml5 { margin-left: 5px; } .ml9 { margin-left: 9px; }
.gi { fill: none; stroke: #999; stroke-width: 1.6; }
.gl { fill: none; stroke: #a5a5a5; stroke-width: 1.5; }
.gt { font: bold 10px "Noto Sans", sans-serif; fill: #a5a5a5; stroke: none; }
.gt.big { font-size: 15px; }
.letter { color: #999; font-size: 16px; }
.tf { color: #b0b0b0; font: 12px "Noto Sans", sans-serif; }
.mn { margin-right: 0; }
.right-tools { display: flex; margin-right: 5px; padding-top: 6px; gap: 12px; }
.right-tools svg:last-child { margin-top: -4px; }
.right-tools svg:first-child { margin-top: 1px; }
.badge-num { font: 14px "Open Sans", sans-serif; fill: #fff; }
.mini { font: 10px "Open Sans", sans-serif; fill: #fff; }

.dock { display: flex; height: 219px; flex: none; }
.side { display: flex; flex-direction: column; width: 377px; height: 214px; border-top: 1px solid #a0a0a0; border-right: 1px solid #a0a0a0; }
.workspace { flex: 1; margin-right: 2px; height: 213px; background: #ababab; border: solid #696969; border-width: 2px 0 0 1px; }
.panel { padding: 3px 4px 0 5px; border-bottom: 1px solid #a0a0a0; flex: none; }
.watch { height: 105px; }
.navi { height: 108px; }
.cap { display: flex; align-items: center; height: 16px; padding-right: 4px; justify-content: space-between; line-height: 15px; }
.cap span { width: 347px; height: 16px; padding-left: 4px; background: linear-gradient(90deg, #bccbda, #d7e4f2); letter-spacing: -.55px; }
.cap .cap-n { letter-spacing: -.85px; }
.box { height: 52px; margin-top: 1px; border: solid #a0a0a0; border-width: 1px 0 0 1px; background: linear-gradient(90deg, #fff 344px, #f0f0f0 344px); }
.grid { display: grid; grid-template-columns: 131px 85px 85px 42px; height: 25px; }
.grid span { padding: 3px 5px 0 0; text-align: right; letter-spacing: -.3px; border-right: 1px solid #e5e5e5; }
.grid span:first-child { text-align: left; padding-left: 6px; }
.grid.head { height: 26px; }
.quote { background: #f0fff0; width: 343px; color: #f00; }
.grid.quote span { border: 0; padding-top: 2px; letter-spacing: -.55px; }
.grid.quote span:first-child { display: flex; align-items: center; gap: 6px; padding: 0 0 2px 5px; color: #000; }
.tabs { display: flex; height: 27px; border-top: 1px solid #000; border-bottom: 1px solid #fff; margin-left: 1px; padding-left: 2px; }
.tab { position: relative; height: 23px; line-height: 23px; color: #808080; text-align: center; letter-spacing: -.35px; }
.tab:not(.active)::after { content: ""; position: absolute; right: 0; top: 4px; height: 19px; width: 1px; background: #777; }
.tab.active { height: 25px; margin-top: -1px; background: #fff; color: #000; border: 1px solid #000; border-top: 0; box-shadow: 1px 1px #b0b0b0; line-height: 25px; }
.t-sym { width: 81px; } .t-tick { width: 91px; }
.t-com { width: 87px; } .t-fav { width: 84px; }
.tree { overflow: hidden; height: 55px; position: relative; padding-left: 41px; }
.tree::before { content: ""; position: absolute; left: 15px; top: 1px; bottom: 0; width: 1px; background: repeating-linear-gradient(#777 0 1px, transparent 1px 2px); }
.node { display: flex; height: 22px; align-items: center; border-left: 1px dotted #777; letter-spacing: -.55px; }
.node::before { content: ""; width: 15px; border-top: 1px dotted #777; }
.node span { margin-left: 7px; margin-top: 2px; }
.node svg { margin-top: 3px; }

.tester { display: flex; height: 649px; flex: none; padding-right: 3px; }
.rail { width: 20px; padding-left: 3px; margin-top: -1px; flex: none; }
.rail svg { margin: 0 0 2px -3px; }
.rail-bar { display: flex; align-items: flex-end; justify-content: center; width: 16px; height: 627px; background: linear-gradient(#d7e4f2, #bccbda); }
.rail-bar span { writing-mode: vertical-rl; transform: rotate(180deg); line-height: 16px; letter-spacing: -.45px; padding-top: 1px; }
.tester-main { flex: 1; height: 645px; border: solid #a0a0a0; border-width: 1px 0 0 1px; border-right: 2px solid #f8f8f8; }
.graph { position: relative; display: flex; height: 616px; background: #fff; padding: 4px 0 0 4px; }
.plot-col { width: 1840px; }
.plot { position: relative; height: 594px; }
.chart { overflow: visible; }
.legend, .size-label { position: absolute; left: 5px; top: 2px; font: 12px/18px "Noto Sans", sans-serif; letter-spacing: -.3px; word-spacing: 1.2px; }
.size-label { top: 478px; }
.lb { color: #0000ac; } .lg { color: #00b400; }
.xaxis { display: flex; font: 12px/16px "Noto Sans", sans-serif; }
.xaxis span { width: 40px; text-align: right; flex: none; }
.xaxis span:first-child { width: 8px; }
.xaxis span:nth-child(2) { width: 32px; }
.yaxis { display: flex; flex-direction: column; padding-top: 15px; font: 12px/40px "Noto Sans", sans-serif; }
.yaxis span { height: 40px; }
.tooltip {
  position: absolute; left: 1109px; top: 265px; width: 255px; height: 65px; padding: 1px 0 0 5px;
  background: #f9f9f9; border: 1px solid #e3e3e3; border-radius: 4px; color: #575757; box-shadow: 2px 2px 1px #777; letter-spacing: -.46px;
}
.deal { letter-spacing: -.41px; }
.tester-tabs { height: 28px; margin-left: 0; padding-left: 0; }
.t-set { width: 81px; padding-left: 2px; } .t-res { width: 71px; } .t-gra { width: 65px; } .t-rep { width: 70px; } .t-jou { width: 72px; }

.status { display: flex; height: 31px; flex: none; border-top: 1px solid #a0a0a0; border-bottom: 1px solid #a9b2be; padding-top: 4px; box-shadow: inset 0 1px #fff; }
.status > span { height: 24px; line-height: 24px; border-left: 1px solid #a0a0a0; letter-spacing: -.43px; }
.status .s-help { width: 1024px; padding-left: 2px; border: 0; }
.c1 { width: 149px; padding-left: 5px; } .c2 { width: 131px; } .c3 { width: 89px; } .c4 { width: 89px; } .c5 { width: 85px; } .c6 { width: 87px; } .c7 { width: 84px; }
.traffic { display: flex; padding-left: 5px; gap: 4px; }
.traffic svg { margin-top: 2px; }

.taskbar { display: flex; height: 59px; flex: none; background: linear-gradient(90deg, #e0eef5 0, #e0edf7 400px, #d3e0f8 550px, #d8def5 640px, #d2e3f9 800px, #d7def6 950px, #d8daed 1110px, #d2dff8 1240px, #d9daed 1400px, #dfeaf5 1520px, #e0ecf6 1920px); }
.weather { display: flex; width: 447px; padding: 6px 0 0 27px; }
.wt { display: flex; flex-direction: column; margin: 2px 0 0 -1px; letter-spacing: -.25px; }
.w2 { color: #5a5f66; }
.apps { display: flex; align-items: flex-start; flex: none; }
.start { margin-top: 15px; }
.search { display: flex; align-items: center; width: 274px; height: 40px; margin: 9px 3px 0 16px; padding: 0 4px 0 14px; border: 1px solid #c9d2e6; border-radius: 20px; background: #f2f5fd; color: #555; }
.search span { margin: 1px 0 0 10px; font-size: 16px; }
.food { margin: 2px 0 0 auto; }
.app { position: relative; display: flex; justify-content: center; width: 55px; height: 56px; padding-top: 13px; }
.run::after { content: ""; position: absolute; left: 24px; top: 49px; width: 8px; height: 4px; border-radius: 2px; background: #858890; }
.sel { background: #eceffa; border-radius: 5px; width: 49px; height: 50px; margin: 4px 3px 0; padding-top: 10px; }
.sel::after { left: 14px; top: 46px; width: 20px; background: #0f78d4; }
.tray { display: flex; margin-left: auto; align-items: center; height: 57px; padding-right: 22px; }
.lang { display: flex; flex-direction: column; align-items: center; margin: 0 22px 2px 26px; width: 28px; letter-spacing: -.3px; }
.spk { margin-left: 8px; } .bat { margin-left: 8px; }
.clock { display: flex; flex-direction: column; align-items: flex-end; width: 97px; margin-bottom: 2px; letter-spacing: -.05px; }
.bell { margin-left: 11px; }
```
